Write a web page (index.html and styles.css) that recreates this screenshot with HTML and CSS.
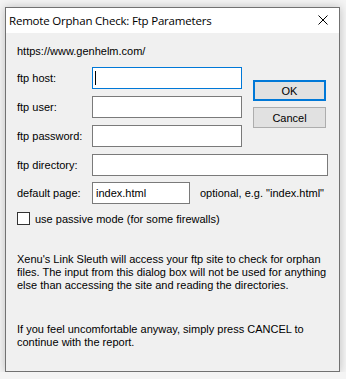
FILE: index.html
```html
<!DOCTYPE html>
<html lang="en">
<head>
  <meta charset="UTF-8" />
  <title>Remote Orphan Check: Ftp Parameters</title>
  <link rel="stylesheet" href="styles.css">
</head>
<body>
  <div class="ventana">
    <div class="titulo">
      <span class="titulo-texto">Remote Orphan Check: Ftp Parameters</span>
      <svg class="cerrar" width="10" height="10" viewBox="0 0 10 10">
        <path d="M0.5 0.5 L9.5 9.5 M9.5 0.5 L0.5 9.5" stroke="#000" stroke-width="1" fill="none"/>
      </svg>
    </div>

    <div class="contenido">
      <p class="url">https://www.genhelm.com/</p>

      <div class="bloque-superior">
        <div class="campos">
          <div class="fila">
            <label>ftp host:</label>
            <div class="campo campo-activo"><span class="cursor"></span></div>
          </div>
          <div class="fila">
            <label>ftp user:</label>
            <div class="campo"></div>
          </div>
          <div class="fila">
            <label>ftp password:</label>
            <div class="campo"></div>
          </div>
        </div>

        <div class="botones">
          <button class="boton boton-ok">OK</button>
          <button class="boton">Cancel</button>
        </div>
      </div>

      <div class="fila fila-dir">
        <label>ftp directory:</label>
        <div class="campo campo-largo"></div>
      </div>

      <div class="fila fila-pagina">
        <label>default page:</label>
        <div class="campo campo-corto">index.html</div>
        <span class="nota">optional, e.g. "index.html"</span>
      </div>

      <div class="opcion">
        <span class="casilla"></span>
        <span>use passive mode (for some firewalls)</span>
      </div>

      <p class="texto texto-1">Xenu's Link Sleuth will access your ftp site to check for orphan files. The input from this dialog box will not be used for anything else than accessing the site and reading the directories.</p>

      <p class="texto texto-2">If you feel uncomfortable anyway, simply press CANCEL to continue with the report.</p>
    </div>
  </div>
</body>
</html>
```

FILE: styles.css
```css
* {
  box-sizing: border-box;
  margin: 0;
  padding: 0;
}

body {
  background-color: #f4f4f4;
  font-family: 'Liberation Sans', Arial, sans-serif;
  font-size: 11px;
  color: #000;
  padding: 7px 0 0 5px;
}

.ventana {
  width: 335px;
  height: 365px;
  border: 1px solid #717171;
  background-color: #f0f0f0;
  box-shadow: 0 0 9px rgba(0, 0, 0, 0.22);
  display: flex;
  flex-direction: column;
}

.titulo {
  height: 25px;
  background-color: #fff;
  display: flex;
  align-items: center;
  justify-content: space-between;
  padding: 0 11px 1px 3px;
}

.titulo-texto {
  font-family: 'Open Sans', 'Noto Sans', sans-serif;
  font-size: 11.5px;
  letter-spacing: -0.2px;
  color: #000;
}

.contenido {
  padding: 12px 10px 0 11px;
  flex: 1;
}

.url {
  line-height: 13px;
  margin-bottom: 9px;
}

.bloque-superior {
  display: flex;
}

.campos {
  display: flex;
  flex-direction: column;
  gap: 7px;
}

.fila {
  display: flex;
  align-items: center;
  height: 22px;
}

.fila label {
  width: 75px;
}

.campo {
  width: 150px;
  height: 22px;
  border: 1px solid #7a7a7a;
  background-color: #fff;
  padding: 0 3px;
  line-height: 20px;
}

.campo-activo {
  border-color: #0078d7;
  position: relative;
}

.cursor {
  position: absolute;
  left: 2px;
  top: 3px;
  width: 1px;
  height: 14px;
  background-color: #000;
}

.botones {
  display: flex;
  flex-direction: column;
  gap: 6px;
  margin: 13px 0 0 11px;
}

.boton {
  width: 73px;
  height: 21px;
  background-color: #e1e1e1;
  border: 1px solid #adadad;
  font-family: 'Liberation Sans', Arial, sans-serif;
  font-size: 11px;
  color: #000;
}

.boton-ok {
  border: 2px solid #0078d7;
}

.fila-dir {
  margin-top: 7px;
}

.campo-largo {
  width: 236px;
}

.fila-pagina {
  margin-top: 6px;
}

.campo-corto {
  width: 98px;
}

.nota {
  margin-left: 10px;
}

.opcion {
  display: flex;
  align-items: center;
  gap: 5px;
  margin-top: 8px;
}

.casilla {
  width: 13px;
  height: 13px;
  border: 1px solid #333;
  background-color: #fff;
}

.texto {
  line-height: 13px;
  width: 310px;
}

.texto-1 {
  margin-top: 28px;
}

.texto-2 {
  margin-top: 31px;
}
```
